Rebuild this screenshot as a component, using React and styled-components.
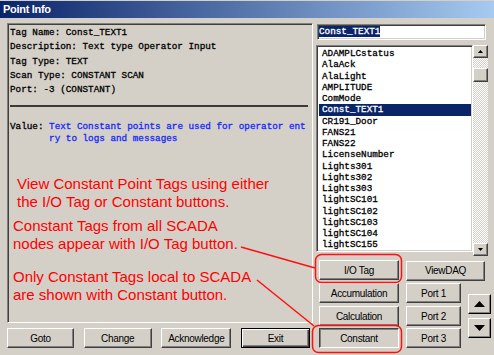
import React from "react"
import styled, { createGlobalStyle, css } from "styled-components"

const GlobalStyle = createGlobalStyle`
  html, body { margin: 0; padding: 0; background: #d4d0c8; }
  body { width: 494px; height: 355px; overflow: hidden; }
`

const raised = css`
  border: 1px solid;
  border-color: #fff #404040 #404040 #fff;
  box-shadow: inset -1px -1px #808080;
`
const sunken = css`
  border: 1px solid;
  border-color: #808080 #fff #fff #808080;
  box-shadow: inset 1px 1px #404040, inset -1px -1px #d4d0c8;
`

const Window = styled.div`
  position: relative;
  width: 494px;
  height: 355px;
  box-sizing: border-box;
  padding-top: 1px;
  background: #d4d0c8;
  font-family: "Liberation Sans", Arial, sans-serif;
`
const TitleBar = styled.div`
  height: 17px;
  padding-left: 3px;
  background: linear-gradient(to right, #0a246a, #a6caf0);
  color: #fff;
  font-size: 11px;
  font-weight: bold;
  letter-spacing: -0.3px;
  line-height: 17px;
`
const Body = styled.div`
  display: flex;
  gap: 3px;
  padding: 5px 0 0 7px;
`
const LeftColumn = styled.div`
  width: 306px;
  display: flex;
  flex-direction: column;
  gap: 5px;
`
const InfoPanel = styled.div`
  height: 300px;
  box-sizing: border-box;
  padding: 2px 0 0 2px;
  ${sunken}
`
const Mono = styled.div`
  font-family: "Liberation Mono", "Courier New", monospace;
  font-size: 9.3px;
  line-height: ${p => p.$lh || 14.25}px;
  color: #000;
  white-space: pre;
  -webkit-text-stroke: 0.3px currentColor;
`
const Rule = styled.div`
  height: 2px;
  margin: 8px 4px 0 0;
  background: #3a3a3a;
`
const ValueRow = styled.div`
  display: flex;
  margin-top: 14px;
`
const Blue = styled.span`
  color: #1428ff;
`
const Note = styled.p`
  margin: ${p => p.$top}px 0 0 ${p => p.$left}px;
  color: #ff0000;
  font-size: 15px;
  line-height: 18px;
`
const ButtonRow = styled.div`
  width: 303px;
  display: flex;
  justify-content: space-between;
`
const Button = styled.button`
  box-sizing: border-box;
  width: ${p => (p.$w ? `${p.$w}px` : "auto")};
  height: 20px;
  padding: 0;
  background: #d4d0c8;
  color: #000;
  font-family: "Liberation Sans", Arial, sans-serif;
  font-size: 10px;
  letter-spacing: -0.3px;
  ${raised}
  ${p => p.$default && css`
    border-color: #000;
    box-shadow: inset 1px 1px #fff, inset -1px -1px #404040, inset -2px -2px #808080;
  `}
  ${p => p.$pressed && css`
    border-color: #404040 #fff #fff #404040;
    box-shadow: inset 1px 1px #808080;
  `}
`
const RightColumn = styled.div`
  width: 176px;
  display: flex;
  flex-direction: column;
`
const TextField = styled.div`
  width: 169px;
  height: 16px;
  margin: 1px 0 0 1px;
  box-sizing: border-box;
  padding: 1px 0 0 1px;
  background: #fff;
  ${sunken}
`
const Selected = styled.span`
  display: inline-block;
  background: #0a246a;
  color: #fff;
  line-height: 11px;
`
const ListRow = styled.div`
  display: flex;
  align-items: flex-start;
  margin-top: 5px;
`
const ListBox = styled.div`
  width: 157px;
  height: 207px;
  box-sizing: border-box;
  padding: 2px 1px 0 2px;
  overflow: hidden;
  background: #fff;
  ${sunken}
`
const ListItem = styled(Mono)`
  line-height: 11.25px;
  padding-left: 3px;
  ${p => p.$active && css`
    background: #0a246a;
    color: #fff;
  `}
`
const ScrollBar = styled.div`
  width: 15px;
  height: 211px;
  display: flex;
  flex-direction: column;
  background: repeating-conic-gradient(#d4d0c8 0 25%, #fff 0 50%) 0 0 / 2px 2px;
`
const ScrollButton = styled.div`
  height: 13px;
  box-sizing: border-box;
  display: flex;
  align-items: center;
  justify-content: center;
  background: #d4d0c8;
  ${raised}
`
const Thumb = styled.div`
  height: 14px;
  margin-top: 10px;
  box-sizing: border-box;
  background: #d4d0c8;
  ${raised}
`
const Track = styled.div`
  flex: 1;
`
const ButtonGrid = styled.div`
  margin: 4px 0 0 3px;
  display: grid;
  grid-template-columns: 80px 55px 23px;
  grid-template-rows: 20px 20px 19px 20px;
  column-gap: 7px;
  row-gap: 3px;
`
const WideCell = styled.div`
  grid-column: 2 / 4;
`
const ArrowStack = styled.div`
  grid-column: 3;
  grid-row: 2 / span 3;
  display: flex;
  flex-direction: column;
  justify-content: center;
  gap: 4px;
`
const ArrowButton = styled.div`
  height: 20px;
  box-sizing: border-box;
  display: flex;
  align-items: center;
  justify-content: center;
  background: #d4d0c8;
  border: 1px solid;
  border-color: #fff #000 #000 #fff;
  box-shadow: inset -1px -1px #808080, inset 1px 1px #d4d0c8;
`
const Overlay = styled.svg`
  position: absolute;
  top: 0;
  left: 0;
  pointer-events: none;
`

const Tri = ({ up, w = 11, h = 6 }) => (
  <svg width={w} height={h}>
    <polygon points={up ? `0,${h} ${w},${h} ${w / 2},0` : `0,0 ${w},0 ${w / 2},${h}`} fill="#000" />
  </svg>
)

const fields = [
  "Tag Name: Const_TEXT1",
  "Description: Text type Operator Input",
  "Tag Type: TEXT",
  "Scan Type: CONSTANT SCAN",
  "Port: -3 (CONSTANT)",
]

const tags = [
  "ADAMPLCstatus", "AlaAck", "AlaLight", "AMPLITUDE", "ComMode", "Const_TEXT1",
  "CR191_Door", "FANS21", "FANS22", "LicenseNumber", "Lights301", "Lights302",
  "Lights303", "lightSC101", "lightSC102", "lightSC103", "lightSC104", "lightSC155",
]

const App = () => (
  <Window>
    <GlobalStyle />
    <TitleBar>Point Info</TitleBar>
    <Body>
      <LeftColumn>
        <InfoPanel>
          {fields.map(f => <Mono key={f}>{f}</Mono>)}
          <Rule />
          <ValueRow>
            <Mono $lh={12}>{"Value: "}</Mono>
            <Mono $lh={12}>
              <Blue>Text Constant points are used for operator ent</Blue>{"\n"}
              <Blue>ry to logs and messages</Blue>
            </Mono>
          </ValueRow>
          <Note $top={30} $left={7}>View Constant Point Tags using either<br />the I/O Tag or Constant buttons.</Note>
          <Note $top={6} $left={3}>Constant Tags from all SCADA<br />nodes appear with I/O Tag button.</Note>
          <Note $top={15} $left={3}>Only Constant Tags local to SCADA<br />are shown with Constant button.</Note>
        </InfoPanel>
        <ButtonRow>
          <Button $w={67}>Goto</Button>
          <Button $w={68}>Change</Button>
          <Button $w={70}>Acknowledge</Button>
          <Button $w={69} $default>Exit</Button>
        </ButtonRow>
      </LeftColumn>
      <RightColumn>
        <TextField>
          <Mono $lh={11}><Selected>Const_TEXT1</Selected></Mono>
        </TextField>
        <ListRow>
          <ListBox>
            {tags.map(t => <ListItem key={t} $active={t === "Const_TEXT1"}>{t}</ListItem>)}
          </ListBox>
          <ScrollBar>
            <ScrollButton><Tri up w={5} h={3} /></ScrollButton>
            <Thumb />
            <Track />
            <ScrollButton><Tri w={5} h={3} /></ScrollButton>
          </ScrollBar>
        </ListRow>
        <ButtonGrid>
          <Button>I/O Tag</Button>
          <WideCell><Button $w={79}>ViewDAQ</Button></WideCell>
          <Button>Accumulation</Button>
          <Button>Port 1</Button>
          <ArrowStack>
            <ArrowButton><Tri up /></ArrowButton>
            <ArrowButton><Tri /></ArrowButton>
          </ArrowStack>
          <Button>Calculation</Button>
          <Button>Port 2</Button>
          <Button $pressed>Constant</Button>
          <Button>Port 3</Button>
        </ButtonGrid>
      </RightColumn>
    </Body>
    <Overlay width="494" height="355">
      <g fill="none" stroke="#ff1010" strokeWidth="1.5">
        <rect x="315.5" y="254.5" width="86" height="28" rx="6" />
        <rect x="312.5" y="325.5" width="89" height="27" rx="6" />
        <line x1="241" y1="247" x2="315" y2="268" />
        <line x1="257" y1="280" x2="314" y2="326" />
      </g>
    </Overlay>
  </Window>
)

export default App
